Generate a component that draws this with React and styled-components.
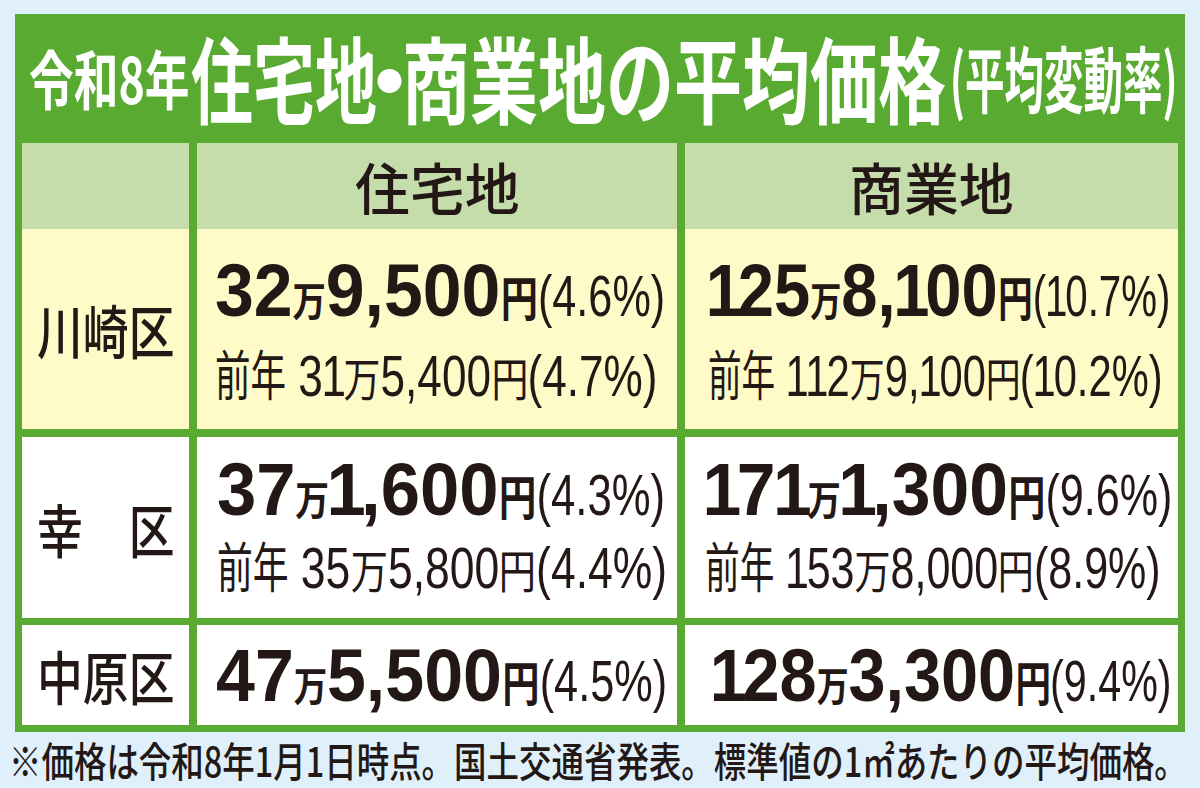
import React from "react";
import styled, { createGlobalStyle } from "styled-components";

const LATIN = `"Liberation Sans", Arial, "Noto Sans CJK JP", sans-serif`;
const CJK = `"Noto Sans CJK JP", "Noto Sans CJK SC", sans-serif`;

const GREEN = "#58aa30";
const HEAD = "#c5dcab";
const YELLOW = "#fffbc9";
const INK = "#231815";

const GlobalStyle = createGlobalStyle`
  html, body {
    margin: 0;
    padding: 0;
    background: #dff0fa;
  }
  * { box-sizing: border-box; }
`;

// advance widths (em) for the half-width glyphs we use, everything else is full width
const ADV = { ",": 0.278, ".": 0.278, "(": 0.333, ")": 0.333, "%": 0.889, " ": 0.278, "\u00a0": 0.278 };
const measure = (text, cut) =>
  [...text].reduce((sum, ch) => {
    if (ch === "1") return sum + 0.556 - cut;
    if (/[0-9]/.test(ch)) return sum + 0.556;
    if (ch in ADV) return sum + ADV[ch];
    return sum + 1;
  }, 0);

const FitBox = styled.span`
  display: inline-block;
  white-space: nowrap;
  vertical-align: baseline;
  font-family: ${(p) => p.$family};
  font-size: ${(p) => p.$size}px;
  font-weight: ${(p) => p.$weight};
  line-height: 1;
`;

const FitInner = styled.span`
  display: inline-block;
  transform-origin: 0 50%;
`;

// the "1" of the reference typeface is narrower than Arial's
const One = styled.span`
  margin-left: ${(p) => -p.$cut * 0.35}em;
  margin-right: ${(p) => -p.$cut * 0.65}em;
`;

function Fit({ text, size, weight = 400, family = CJK, sx, w, cut = 0 }) {
  const natural = measure(text, cut) * size;
  const scale = w ? w / natural : sx;
  const width = w || natural * sx;
  const body = cut
    ? [...text].map((ch, i) => (ch === "1" ? <One key={i} $cut={cut}>1</One> : ch))
    : text;
  return (
    <FitBox $size={size} $weight={weight} $family={family} style={{ width }}>
      <FitInner style={{ transform: `scaleX(${scale})` }}>{body}</FitInner>
    </FitBox>
  );
}

const KIND = {
  big: { size: 75, weight: 700, family: LATIN, sx: 0.925, cut: 0.1 },
  man: { size: 40, weight: 700, family: CJK, sx: 0.83 },
  yen: { size: 48, weight: 700, family: CJK, sx: 0.77 },
  rate: { size: 58, weight: 400, family: LATIN, sx: 0.74, cut: 0.08 },
  pj: { size: 54, weight: 400, family: CJK, sx: 0.64 },
  prev: { size: 58, weight: 400, family: LATIN, sx: 0.74, cut: 0.08 },
  pc: { size: 46, weight: 400, family: CJK, sx: 0.78 },
};

const partWidth = ([t, k]) => measure(t, KIND[k].cut || 0) * KIND[k].size * KIND[k].sx;

const LineBox = styled.div`
  white-space: nowrap;
  font-size: 0;
  line-height: 1;
  color: ${INK};
`;

const LineInner = styled.span`
  display: inline-block;
  transform-origin: 0 50%;
`;

function Line({ parts, w }) {
  const natural = parts.reduce((s, p) => s + partWidth(p), 0);
  return (
    <LineBox style={{ width: w }}>
      <LineInner style={{ transform: `scaleX(${w / natural})` }}>
        {parts.map(([t, k], i) => (
          <Fit key={i} text={t} {...KIND[k]} />
        ))}
      </LineInner>
    </LineBox>
  );
}

const Page = styled.div`
  width: 1200px;
  height: 788px;
  padding-top: 14px;
  overflow: hidden;
`;

const Frame = styled.div`
  width: 1170px;
  margin-left: 15px;
  background: ${GREEN};
  padding: 0 7px 7px;
`;

const TitleBar = styled.div`
  height: 129px;
  display: flex;
  align-items: center;
  padding: 0 0 6px 7px;
  color: #fff;
  font-size: 0;
`;

const TitleGap = styled.span`
  display: inline-block;
  width: ${(p) => p.$w}px;
`;

// the middle dot is set narrow in the reference
const TitleDot = styled.span`
  display: inline-flex;
  justify-content: center;
  width: ${(p) => p.$w}px;
  font-family: ${CJK};
  font-size: 94px;
  font-weight: 700;
  line-height: 1;
`;

const Row = styled.div`
  display: grid;
  grid-template-columns: 167px 480px 493px;
  column-gap: 8px;
  height: ${(p) => p.$h}px;
  margin-top: ${(p) => p.$mt || 0}px;
`;

const Cell = styled.div`
  background: ${(p) => p.$bg};
  display: flex;
  align-items: center;
  justify-content: center;
  color: ${INK};
  font-size: 0;
`;

const PriceCell = styled.div`
  background: ${(p) => p.$bg};
  display: flex;
  flex-direction: column;
  justify-content: center;
  align-items: flex-start;
  gap: ${(p) => p.$gap}px;
  padding-left: ${(p) => p.$pl}px;
  padding-bottom: ${(p) => p.$pb || 0}px;
`;

const Footnote = styled.div`
  height: 56px;
  display: flex;
  align-items: center;
  padding: 0 0 2px 9px;
  color: ${INK};
  font-size: 0;
`;

const mainParts = ([man, rest, rate]) => [
  [man, "big"],
  ["万", "man"],
  [rest, "big"],
  ["円", "yen"],
  [`(${rate}%)`, "rate"],
];

const prevParts = ([man, rest, rate]) => [
  ["前年", "pj"],
  [`\u00a0${man}`, "prev"],
  ["万", "pc"],
  [rest, "prev"],
  ["円", "pc"],
  [`(${rate}%)`, "prev"],
];

const rows = [
  {
    label: "川崎区",
    bg: YELLOW,
    h: 200,
    gap: 18,
    cells: [
      { main: ["32", "9,500", "4.6"], prev: ["31", "5,400", "4.7"], w: [450, 443], pl: 18 },
      { main: ["125", "8,100", "10.7"], prev: ["112", "9,100", "10.2"], w: [462, 455], pl: 23 },
    ],
  },
  {
    label: "幸　区",
    bg: "#fff",
    h: 181,
    mt: 8,
    gap: 11,
    pb: 6,
    cells: [
      { main: ["37", "1,600", "4.3"], prev: ["35", "5,800", "4.4"], w: [448, 450], pl: 20 },
      { main: ["171", "1,300", "9.6"], prev: ["153", "8,000", "8.9"], w: [467, 456], pl: 20 },
    ],
  },
  {
    label: "中原区",
    bg: "#fff",
    h: 100,
    mt: 7,
    gap: 0,
    cells: [
      { main: ["47", "5,500", "4.5"], w: [451], pl: 19 },
      { main: ["128", "3,300", "9.4"], w: [460], pl: 27 },
    ],
  },
];

export default function App() {
  return (
    <>
      <GlobalStyle />
      <Page>
        <Frame>
          <TitleBar>
            <Fit text="令和8年" size={64} weight={700} w={159} />
            <TitleGap $w={3} />
            <Fit text="住宅地" size={94} weight={700} w={186} />
            <TitleDot $w={25}>・</TitleDot>
            <Fit text="商業地の平均価格" size={94} weight={700} w={544} />
            <TitleGap $w={4} />
            <Fit text="(平均変動率)" size={72} weight={700} w={224} />
          </TitleBar>

          <Row $h={86}>
            <Cell $bg={HEAD} />
            <Cell $bg={HEAD}>
              <Fit text="住宅地" size={56} weight={500} sx={0.98} />
            </Cell>
            <Cell $bg={HEAD}>
              <Fit text="商業地" size={56} weight={500} sx={0.98} />
            </Cell>
          </Row>

          {rows.map((row) => (
            <Row key={row.label} $h={row.h} $mt={row.mt}>
              <Cell $bg={row.bg}>
                <Fit text={row.label} size={58} weight={500} sx={0.79} />
              </Cell>
              {row.cells.map((c, i) => (
                <PriceCell key={i} $bg={row.bg} $gap={row.gap} $pl={c.pl} $pb={row.pb}>
                  <Line parts={mainParts(c.main)} w={c.w[0]} />
                  {c.prev && <Line parts={prevParts(c.prev)} w={c.w[1]} />}
                </PriceCell>
              ))}
            </Row>
          ))}
        </Frame>

        <Footnote>
          <Fit
            text="※価格は令和8年1月1日時点。国土交通省発表。標準値の1㎡あたりの平均価格。"
            size={41}
            weight={500}
            w={1176}
          />
        </Footnote>
      </Page>
    </>
  );
}
